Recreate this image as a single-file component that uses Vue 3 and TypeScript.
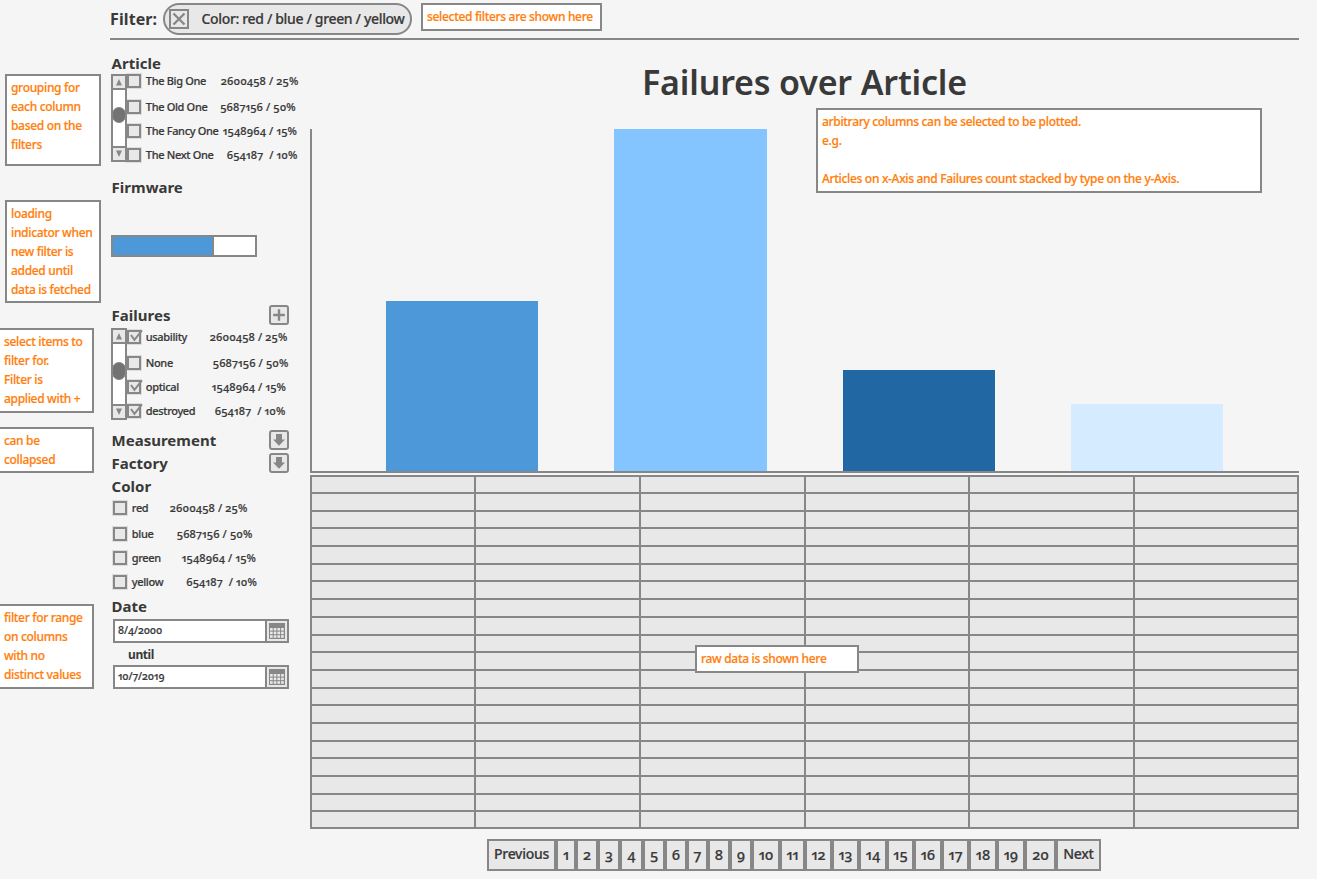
<script setup lang="ts">
interface Item {
  label: string
  value: string
  labelWidth: number
  checked?: boolean
}
interface Page {
  label: string
  width: number
}

const article: Item[] = [
  { label: 'The Big One', value: '2600458 / 25%', labelWidth: 75 },
  { label: 'The Old One', value: '5687156 / 50%', labelWidth: 74.4 },
  { label: 'The Fancy One', value: '1548964 / 15%', labelWidth: 77 },
  { label: 'The Next One', value: '654187  / 10%', labelWidth: 81 },
]
const failures: Item[] = [
  { label: 'usability', value: '2600458 / 25%', labelWidth: 64, checked: true },
  { label: 'None', value: '5687156 / 50%', labelWidth: 67 },
  { label: 'optical', value: '1548964 / 15%', labelWidth: 66, checked: true },
  { label: 'destroyed', value: '654187  / 10%', labelWidth: 69, checked: true },
]
const colors: Item[] = [
  { label: 'red', value: '2600458 / 25%', labelWidth: 38 },
  { label: 'blue', value: '5687156 / 50%', labelWidth: 45 },
  { label: 'green', value: '1548964 / 15%', labelWidth: 50 },
  { label: 'yellow', value: '654187  / 10%', labelWidth: 54.5 },
]

const bars = [
  { name: 'one', height: 170 },
  { name: 'two', height: 342 },
  { name: 'three', height: 101 },
  { name: 'four', height: 67 },
]

const widths = [20, 22, 22, 23, 22, 22, 21, 22, 22, 28, 25, 27, 27, 28, 27, 28, 27, 28, 28, 31]
const pages: Page[] = [
  { label: 'Previous', width: 69 },
  ...widths.map((width, i) => ({ label: String(i + 1), width })),
  { label: 'Next', width: 45 },
]
</script>

<template>
  <div class="page">
    <aside class="notes">
      <p class="note n1">grouping for<br />each column<br />based on the<br />filters</p>
      <p class="note n2">loading<br />indicator when<br />new filter is<br />added until<br />data is fetched</p>
      <p class="note n3">select items to<br />filter for.<br />Filter is<br />applied with +</p>
      <p class="note n4">can be<br />collapsed</p>
      <p class="note n5">filter for range<br />on columns<br />with no<br />distinct values</p>
    </aside>

    <div class="content">
      <header class="header">
        <span class="filter-title">Filter:</span>
        <div class="chip">
          <button class="close" aria-label="remove">
            <svg viewBox="0 0 16 16" width="16" height="16"><path d="M2.5 2.5 L13.5 13.5 M13.5 2.5 L2.5 13.5" /></svg>
          </button>
          <span>Color: red / blue / green / yellow</span>
        </div>
        <p class="note n-top">selected filters are shown here</p>
      </header>

      <div class="body">
        <section class="sidebar">
          <h2 class="h-article">Article</h2>
          <div class="scroll-list">
            <div class="scrollbar">
              <span class="arrow"><svg viewBox="0 0 12 12" width="12" height="12"><path d="M6 3 L9 9.5 H3 Z" /></svg></span>
              <span class="track"><i class="thumb"></i></span>
              <span class="arrow"><svg viewBox="0 0 12 12" width="12" height="12"><path d="M6 9 L9 2.5 H3 Z" /></svg></span>
            </div>
            <ul class="items">
              <li v-for="item in article" :key="item.label">
                <span class="box"></span>
                <span class="label" :style="{ width: item.labelWidth + 'px' }">{{ item.label }}</span>
                <span class="value">{{ item.value }}</span>
              </li>
            </ul>
          </div>

          <h2 class="h-firmware">Firmware</h2>
          <div class="progress"><div class="progress-fill"></div></div>

          <div class="head h-failures">
            <h2>Failures</h2>
            <button class="tool" aria-label="apply">
              <svg viewBox="0 0 16 16" width="16" height="16"><path class="line" d="M8 2.2 V13.8 M2.2 8 H13.8" /></svg>
            </button>
          </div>
          <div class="scroll-list tall">
            <div class="scrollbar">
              <span class="arrow"><svg viewBox="0 0 12 12" width="12" height="12"><path d="M6 3 L9 9.5 H3 Z" /></svg></span>
              <span class="track"><i class="thumb"></i></span>
              <span class="arrow"><svg viewBox="0 0 12 12" width="12" height="12"><path d="M6 9 L9 2.5 H3 Z" /></svg></span>
            </div>
            <ul class="items">
              <li v-for="item in failures" :key="item.label">
                <span class="box">
                  <svg v-if="item.checked" viewBox="0 0 16 16" width="16" height="16"><path d="M4 5 L7.4 9.8 L15 0.4" /></svg>
                </span>
                <span class="label" :style="{ width: item.labelWidth + 'px' }">{{ item.label }}</span>
                <span class="value">{{ item.value }}</span>
              </li>
            </ul>
          </div>

          <div v-for="name in ['Measurement', 'Factory']" :key="name" class="head" :class="'h-' + name.toLowerCase()">
            <h2>{{ name }}</h2>
            <button class="tool" aria-label="expand">
              <svg viewBox="0 0 16 16" width="16" height="16"><path class="solid" d="M5 2 H11 V7.5 H14 L8 13.8 L2 7.5 H5 Z" /></svg>
            </button>
          </div>

          <h2 class="h-color">Color</h2>
          <ul class="items plain">
            <li v-for="item in colors" :key="item.label">
              <span class="box"></span>
              <span class="label" :style="{ width: item.labelWidth + 'px' }">{{ item.label }}</span>
              <span class="value">{{ item.value }}</span>
            </li>
          </ul>

          <h2 class="h-date">Date</h2>
          <template v-for="(date, i) in ['8/4/2000', '10/7/2019']" :key="date">
            <div v-if="i === 1" class="until">until</div>
            <div class="date">
              <span class="date-text">{{ date }}</span>
              <span class="calendar">
                <svg viewBox="0 0 16 16" width="16" height="16">
                  <rect x="0" y="0" width="16" height="16" fill="#878787" />
                  <g fill="#e8e8e8">
                    <template v-for="r in 3" :key="r">
                      <rect v-for="c in 4" :key="c" :x="c * 3.7 - 2.7" :y="r * 3.6 + 1.4" width="2.7" height="2.6" />
                    </template>
                  </g>
                </svg>
              </span>
            </div>
          </template>
        </section>

        <main class="main">
          <h1>Failures over Article</h1>
          <div class="chart">
            <div v-for="bar in bars" :key="bar.name" class="bar" :class="bar.name" :style="{ height: bar.height + 'px' }"></div>
            <p class="note n-chart">arbitrary columns can be selected to be plotted.<br />e.g.<br /><br />Articles on x-Axis and Failures count stacked by type on the y-Axis.</p>
          </div>
          <div class="table">
            <div v-for="cell in 120" :key="cell" class="cell"></div>
            <p class="note n-table">raw data is shown here</p>
          </div>
          <nav class="pager">
            <button v-for="page in pages" :key="page.label" :style="{ width: page.width + 'px' }">{{ page.label }}</button>
          </nav>
        </main>
      </div>
    </div>
  </div>
</template>

<style>
html,
body {
  margin: 0;
  background: #f5f5f5;
  overflow: hidden;
}
</style>

<style scoped>
.page {
  display: grid;
  grid-template-columns: 110px 1189px;
  width: 1317px;
  height: 879px;
  overflow: hidden;
  background: #f5f5f5;
  color: #393939;
  font-family: 'Noto Sans', 'Open Sans', sans-serif;
  font-weight: 500;
  font-variant-numeric: oldstyle-nums proportional-nums;
  -webkit-text-stroke-width: 0.2px;
}
.page * {
  box-sizing: border-box;
}
h1, h2, p, ul {
  margin: 0;
  padding: 0;
}
ul {
  list-style: none;
}
button {
  padding: 0;
  font: inherit;
  color: inherit;
  font-variant-numeric: inherit;
}
svg {
  display: block;
}

.note {
  border: 2px solid #878787;
  background: #fff;
  color: #ff7f0e;
  padding: 2px 0 0 4px;
  font-size: 12px;
  line-height: 19px;
  letter-spacing: -0.32px;
  white-space: nowrap;
}
.notes {
  padding-top: 74px;
}
.notes .note {
  width: 96px;
}
.n1 { height: 92px; margin-left: 5px; }
.n2 { height: 103px; margin: 34px 0 0 5px; }
.n3 { height: 85px; margin: 25px 0 0 -2px; }
.n4 { height: 46px; margin: 14px 0 0 -2px; }
.n5 { height: 85px; margin: 131px 0 0 -2px; }

.header {
  display: flex;
  align-items: flex-start;
  height: 40px;
  padding-top: 3px;
  border-bottom: 2px solid #878787;
}
.filter-title {
  width: 53px;
  font-size: 16px;
  font-weight: 700;
  line-height: 32px;
  letter-spacing: 0.1px;
  -webkit-text-stroke-width: 0;
}
.chip {
  display: flex;
  align-items: center;
  width: 249px;
  height: 32px;
  padding-left: 4px;
  border: 2px solid #878787;
  border-radius: 16px;
  background: #e8e8e8;
  font-size: 14px;
  letter-spacing: -0.34px;
  white-space: nowrap;
}
.chip span {
  margin: -2px 0 0 12.5px;
}
.close {
  width: 20px;
  height: 20px;
  border: 2px solid #878787;
  background: #e8e8e8;
}
.close svg {
  fill: none;
  stroke: #878787;
  stroke-width: 2.4;
}
.n-top {
  width: 181px;
  height: 28px;
  margin-left: 9px;
}

.body {
  display: grid;
  grid-template-columns: 200px 989px;
}
.sidebar {
  padding-top: 12px;
  font-size: 11px;
}
h2 {
  height: 22px;
  margin-left: 1.6px;
  font-size: 15px;
  line-height: 22px;
  font-weight: 700;
  -webkit-text-stroke-width: 0;
}
.h-firmware { margin-top: 14px; }
.h-failures { margin-top: 47px; }
.h-measurement { margin-top: 9px; }
.h-factory { margin-top: 1px; }
.h-color { margin-top: 1px; }
.h-date { margin-top: 6px; }
.head {
  display: flex;
  align-items: center;
  justify-content: space-between;
  width: 179px;
  height: 22px;
}
.tool {
  width: 20px;
  height: 20px;
  border: 2px solid #878787;
  border-radius: 3px;
  background: #e8e8e8;
}
.line {
  fill: none;
  stroke: #878787;
  stroke-width: 2.4;
}
.solid {
  fill: #878787;
}

.scroll-list {
  display: flex;
  height: 88px;
  margin-left: 1px;
}
.scroll-list.tall {
  height: 92px;
  margin-top: 2px;
}
.tall .items {
  padding-top: 2px;
}
.scrollbar {
  display: flex;
  flex-direction: column;
  width: 16px;
  border: 2px solid #878787;
  background: #fff;
}
.arrow {
  height: 14px;
  background: #e8e8e8;
  border-bottom: 2px solid #878787;
}
.arrow:last-child {
  border-top: 2px solid #878787;
  border-bottom: 0;
}
.arrow svg {
  fill: #878787;
}
.track {
  display: flex;
  flex: 1;
  flex-direction: column;
  padding-top: 17px;
}
.thumb {
  width: 14px;
  height: 16px;
  margin-left: -1px;
  border: 1px solid #878787;
  border-radius: 7px;
  background: #737373;
}
.tall .thumb {
  height: 18px;
}
.tall .track {
  padding-top: 18px;
}
.items {
  display: flex;
  flex-direction: column;
  gap: 10px;
}
.items li {
  display: flex;
  align-items: center;
  height: 14px;
  line-height: 14px;
  white-space: pre;
}
.items li:first-child {
  margin-bottom: 2px;
}
.items.plain {
  margin: 4px 0 0 3px;
}
.box {
  width: 14px;
  height: 14px;
  margin-right: 4.8px;
  border: 2px solid #878787;
  background: #e8e8e8;
  box-shadow: 0 0 0 1px rgba(135, 135, 135, 0.22);
}
.box svg {
  margin: -2px 0 0 -2px;
  overflow: visible;
  fill: none;
  stroke: #878787;
  stroke-width: 2;
}
.label {
  letter-spacing: -0.34px;
}
.value {
  letter-spacing: 0.13px;
}

.progress {
  width: 146px;
  height: 22px;
  margin: 37px 0 0 1px;
  border: 2px solid #878787;
  background: #fff;
}
.progress-fill {
  width: 101px;
  height: 18px;
  border-right: 2px solid #878787;
  background: #4d98d8;
}

.date {
  display: flex;
  width: 176px;
  height: 24px;
  margin-left: 3px;
  border: 2px solid #878787;
  background: #fff;
}
.h-date {
  margin-bottom: 2px;
}
.date-text {
  width: 150px;
  padding-left: 3px;
  font-size: 10.5px;
  line-height: 19px;
  letter-spacing: -0.05px;
}
.calendar {
  display: flex;
  align-items: center;
  justify-content: center;
  width: 22px;
  border-left: 2px solid #878787;
  background: #e8e8e8;
}
.until {
  height: 22px;
  margin-left: 18px;
  font-size: 12px;
  line-height: 24px;
  font-weight: 700;
  letter-spacing: -0.4px;
  -webkit-text-stroke-width: 0;
}

.main {
  padding-top: 20px;
}
h1 {
  height: 44px;
  font-size: 34px;
  line-height: 44px;
  font-weight: 600;
  letter-spacing: -0.17px;
  text-align: center;
  -webkit-text-stroke-width: 0;
}
.chart {
  position: relative;
  display: flex;
  align-items: flex-end;
  gap: 76px;
  height: 344px;
  margin-top: 25px;
  padding-left: 74px;
  border-left: 2px solid #878787;
  border-bottom: 2px solid #878787;
}
.bar {
  width: 152.25px;
}
.one { background: #4d98d8; }
.two { background: #84c5ff; }
.three { background: #2067a3; }
.four { background: #d5ebff; }
.n-chart {
  position: absolute;
  top: -21px;
  left: 504px;
  width: 446px;
  height: 85px;
}
.table {
  position: relative;
  display: grid;
  grid-template-columns: 162px repeat(4, 162.8px) 1fr;
  grid-template-rows: 15px repeat(18, 15.7px) 1fr;
  gap: 2px;
  height: 354px;
  margin-top: 2px;
  padding: 2px;
  background: #878787;
}
.cell {
  background: #e8e8e8;
}
.n-table {
  position: absolute;
  top: 170px;
  left: 385px;
  width: 164px;
  height: 28px;
}
.pager {
  display: flex;
  margin: 10px 0 0 177px;
}
.pager button {
  height: 32px;
  padding-bottom: 3px;
  border: 2px solid #878787;
  background: #e8e8e8;
  font-size: 14.5px;
  letter-spacing: 0;
  white-space: nowrap;
}
.pager button:first-child,
.pager button:last-child {
  font-size: 14px;
  letter-spacing: -0.3px;
}
</style>
